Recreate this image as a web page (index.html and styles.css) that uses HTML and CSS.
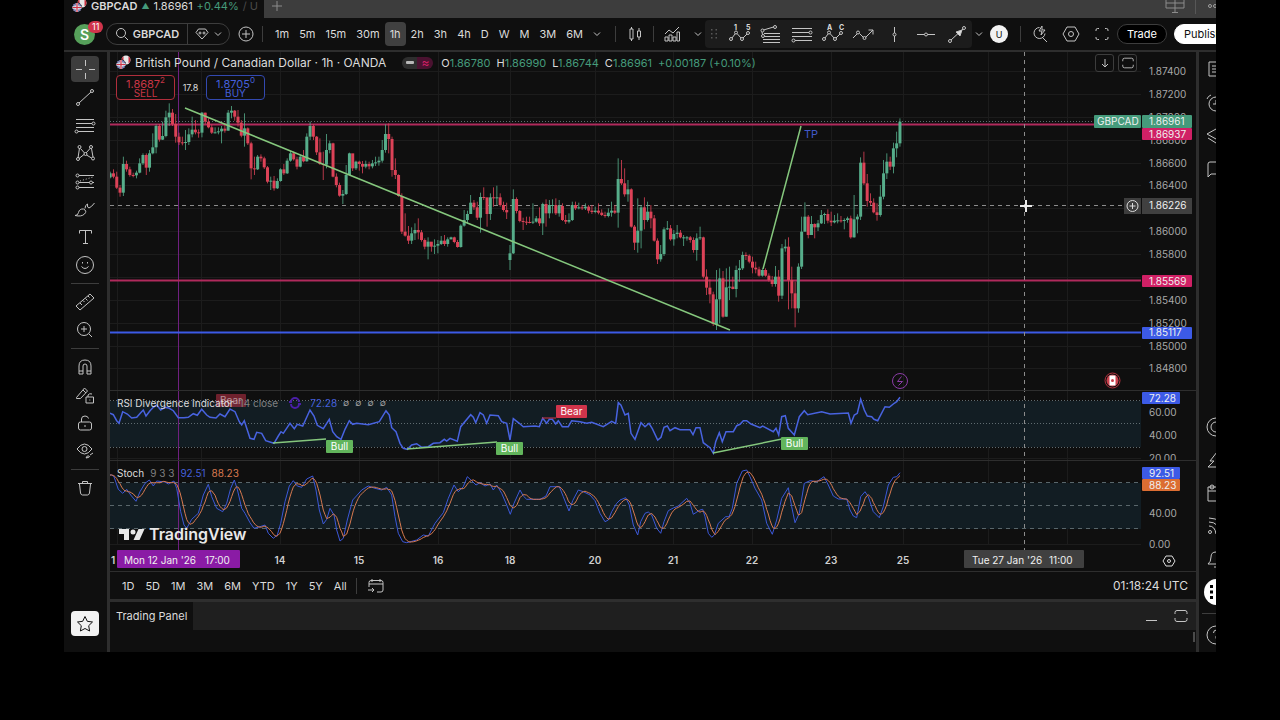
FILE: index.html
```html
<!DOCTYPE html>
<html lang="en">
<head>
  <meta charset="UTF-8">
  <meta name="viewport" content="width=device-width, initial-scale=1.0">
  <title>GBPCAD 1.86961 +0.44%</title>
  <link rel="stylesheet" href="styles.css">
</head>
<body>
  <!-- Shared symbols -->
  <svg class="defs" width="0" height="0">
    <defs>
      <symbol id="flags" viewBox="0 0 15 15">
        <circle cx="10" cy="5" r="4.5" fill="#e8e8e8"/>
        <path d="M7.5 1.3a4.5 4.5 0 0 0 0 7.4zM12.5 1.3a4.5 4.5 0 0 1 0 7.4z" fill="#c9303f"/>
        <circle cx="5" cy="9.5" r="5" fill="#0f0f0f"/>
        <circle cx="5" cy="9.5" r="4.5" fill="#5868a8"/>
        <path d="M2 6.5l6 6M8 6.5l-6 6" stroke="#e8d0d8" stroke-width="1"/>
        <path d="M5 5v9M.5 9.5h9" stroke="#eee" stroke-width="2.4"/>
        <path d="M5 5v9M.5 9.5h9" stroke="#cf3348" stroke-width="1.2"/>
      </symbol>
      <symbol id="chevron" viewBox="0 0 8 8"><path d="M1 2.5l3 3 3-3"/></symbol>
      <symbol id="maximize" viewBox="0 0 16 16"><path d="M2 6V4.500Q2 2.500 4 2.500h8q2 0 2 2V6M2 10v1.500q0 2 2 2h8q2 0 2-2V10"/></symbol>
    </defs>
  </svg>

  <div class="app">
    <!-- Desktop tabs -->
    <div class="tabs">
      <div class="tab">
        <svg class="flags"><use href="#flags"/></svg>
        <b>GBPCAD</b><span class="up arrow">▲</span><span>1.86961</span><span class="up">+0.44%</span><span class="fade">/ U</span>
      </div>
      <button class="new-tab" aria-label="New tab"><svg class="icon" width="12" height="12" viewBox="0 0 12 12"><path d="M6 1v10M1 6h10"/></svg></button>
      <svg class="icon layout-icon" width="20" height="14" viewBox="0 0 20 14"><path d="M1 0v8h18V0M1 3h18M10 0v12M7 12.5h6"/></svg>
      <span class="tab-line"></span>
      <svg class="icon tab-more" width="8" height="12" viewBox="0 0 8 12"><circle cx="2" cy="6" r="1.5"/><circle cx="7" cy="6" r="1.5"/></svg>
    </div>

    <!-- Top toolbar -->
    <header class="topbar">
      <button class="avatar">S<span class="badge">11</span></button>
      <div class="symbol">
        <button class="search"><svg class="icon" width="14" height="14" viewBox="0 0 14 14"><circle cx="6" cy="6" r="4.5"/><path d="M9.5 9.5l3.5 3.5"/></svg>GBPCAD</button>
        <button class="gem" aria-label="Symbol list"><svg class="icon" width="14" height="12" viewBox="0 0 14 12"><path d="M3.5 1h7L13 4.500 7 11 1 4.500zM5 3.500v3M3.500 5h3M9 3.500v3M7.500 5h3"/></svg><svg class="icon" width="8" height="8"><use href="#chevron"/></svg></button>
      </div>
      <button class="add" aria-label="Compare"><svg class="icon" width="16" height="16" viewBox="0 0 16 16"><circle cx="8" cy="8" r="7"/><path d="M8 4v8M4 8h8"/></svg></button>
      <span class="vline"></span>
      <nav class="frames">
        <button>1m</button><button>5m</button><button>15m</button><button>30m</button><button class="active">1h</button><button>2h</button><button>3h</button><button>4h</button><button>D</button><button>W</button><button>M</button><button>3M</button><button>6M</button>
        <button aria-label="More intervals"><svg class="icon" width="8" height="8"><use href="#chevron"/></svg></button>
      </nav>
      <span class="vline"></span>
      <button class="tool" aria-label="Candles"><svg class="icon" width="16" height="16" viewBox="0 0 16 16"><path d="M3 3h3v10H3zM4.500 1v2M4.500 13v2M10.500 5h3v6h-3zM12 2v3M12 11v3"/></svg></button>
      <span class="vline"></span>
      <button class="tool" aria-label="Indicators"><svg class="icon" width="17" height="16" viewBox="0 0 17 16"><path d="M1 15v-4h3v4zM5 15V9h3v6zM9 15v-4h3v4zM13 15V6h2.500v9zM1 8l4-4 4 3 6-6"/></svg></button>
      <button class="mini" aria-label="Templates"><svg class="icon" width="8" height="8"><use href="#chevron"/></svg></button>
      <div class="favorites">
        <svg class="dots" width="8" height="12" viewBox="0 0 8 12"><path d="M1 1h1.500v1.500H1zM5.500 1H7v1.500H5.500zM1 5h1.500v1.500H1zM5.500 5H7v1.500H5.500zM1 9h1.500v1.500H1zM5.500 9H7v1.500H5.500z"/></svg>
        <button aria-label="Elliott impulse"><svg class="icon" width="24" height="20" viewBox="0 0 24 20"><path d="M4 14l3-4M9 9.500l4 4.500M15 14l4-4"/><circle cx="3" cy="15" r="1.500"/><circle cx="8" cy="8.500" r="1.500"/><circle cx="14" cy="15" r="1.500"/><circle cx="20" cy="9" r="1.500"/><text x="6" y="6">1</text><text x="18" y="6">5</text></svg></button>
        <button aria-label="Fib channel"><svg class="icon" width="22" height="20" viewBox="0 0 22 20"><path d="M3.500 6l10-3M2 8l.5 2.500M4 9.500h16M4.500 12.500h15.500M3 15.500h17M3 18.500h17"/><circle cx="2.500" cy="6.500" r="1.500"/><circle cx="15" cy="3" r="1.500"/><circle cx="3" cy="12" r="1.500"/></svg></button>
        <button aria-label="Fib retracement"><svg class="icon" width="22" height="20" viewBox="0 0 22 20"><path d="M1 4.500h20M1 8.500h17M1 12.500h20M4 16.500h17"/><circle cx="19.500" cy="8.500" r="1.500"/><circle cx="2.500" cy="16.500" r="1.500"/></svg></button>
        <button aria-label="Elliott correction"><svg class="icon" width="24" height="20" viewBox="0 0 24 20"><path d="M4 14l3-4M9 9.500l4 4.500M15 14l4-4"/><circle cx="3" cy="15" r="1.500"/><circle cx="8" cy="8.500" r="1.500"/><circle cx="14" cy="15" r="1.500"/><circle cx="20" cy="9" r="1.500"/><text x="6" y="6">A</text><text x="18" y="6">C</text></svg></button>
        <button aria-label="Path"><svg class="icon" width="24" height="20" viewBox="0 0 24 20"><path d="M1 14l4-4M7.500 9.500l4 4M13.500 13.500L21 6M16.500 6H21v4.500"/><circle cx="6" cy="8.500" r="1.500"/><circle cx="12.500" cy="14" r="1.500"/></svg></button>
        <button aria-label="Vertical line"><svg class="icon" width="21" height="20" viewBox="0 0 21 20"><path d="M10.500 3v6M10.500 12v6"/><circle cx="10.500" cy="10.500" r="1.500"/></svg></button>
        <button aria-label="Horizontal line"><svg class="icon" width="20" height="20" viewBox="0 0 20 20"><path d="M1 10.500h7.500M11.500 10.500H19"/><circle cx="10" cy="10.500" r="1.500"/></svg></button>
        <button aria-label="Trend arrow"><svg class="icon" width="20" height="20" viewBox="0 0 20 20"><path d="M4 16L16 5"/><circle cx="3" cy="17" r="1.500"/><circle cx="17" cy="4" r="1.500"/><path d="M15 6l-2 6-4-4z" fill="#dbdbdb"/></svg></button>
      </div>
      <button class="mini" aria-label="Layouts"><svg class="icon" width="8" height="8"><use href="#chevron"/></svg></button>
      <button class="user">U</button>
      <span class="vline"></span>
      <button class="wide first" aria-label="Quick search"><svg class="icon" width="18" height="18" viewBox="0 0 18 18"><path d="M8.500 2.500a5.500 5.500 0 1 0 5.500 6M12 13l4 4M11 1L8 6h3l-1 4 4-5h-3z"/></svg></button>
      <button class="wide" aria-label="Settings"><svg class="icon" width="18" height="16" viewBox="0 0 18 16"><path d="M5 1h8l4 7-4 7H5L1 8z"/><circle cx="9" cy="8" r="2.500"/></svg></button>
      <button class="wide" aria-label="Fullscreen"><svg class="icon" width="16" height="14" viewBox="0 0 16 14"><path d="M2 4V3q0-1.500 1.500-1.500H5M11 1.500h1.500Q14 1.500 14 3v1M14 10v1q0 1.500-1.500 1.500H11M5 12.500H3.500Q2 12.500 2 11v-1"/></svg></button>
      <button class="trade">Trade</button>
      <button class="publish">Publish</button>
    </header>

    <main class="workspace">
      <!-- Drawing tools -->
      <aside class="tools">
        <button class="active" aria-label="Cross"><svg class="icon" width="21" height="21" viewBox="0 0 21 21"><path d="M10.500 1v6M10.500 14v6M1 10.500h6M14 10.500h6"/></svg></button>
        <button aria-label="Trend line"><svg class="icon" width="20" height="20" viewBox="0 0 20 20"><path d="M4 16L16 5"/><circle cx="3" cy="17" r="1.500"/><circle cx="17" cy="4" r="1.500"/></svg></button>
        <button aria-label="Fib retracement"><svg class="icon" width="22" height="20" viewBox="0 0 22 20"><path d="M2 4.500h18M2 8.500h16M2 12.500h18M4 16.500h16"/><circle cx="19.500" cy="8.500" r="1.500"/><circle cx="2.500" cy="16.500" r="1.500"/></svg></button>
        <button aria-label="Patterns"><svg class="icon" width="20" height="20" viewBox="0 0 20 20"><path d="M3 15L4.500 5M5.500 5.500l4 4.500M11 10l4.500-5M16.500 5.500L18 14M4 15.500l5-4M11.500 12l5 3"/><circle cx="4.500" cy="4" r="1.500"/><circle cx="16" cy="4" r="1.500"/><circle cx="10.500" cy="11" r="1.500"/><circle cx="3" cy="16" r="1.500"/><circle cx="18" cy="15.500" r="1.500"/></svg></button>
        <button aria-label="Forecasting"><svg class="icon" width="20" height="20" viewBox="0 0 20 20"><path d="M4 4.500h15M4 11.500h10.500M17.500 11.500H19M4 16.500h15"/><path d="M5 10l13-4" stroke-dasharray="1 2"/><circle cx="2.500" cy="4.500" r="1.500"/><circle cx="2.500" cy="11.500" r="1.500"/><circle cx="2.500" cy="16.500" r="1.500"/><circle cx="16" cy="11.500" r="1.500"/></svg></button>
        <button aria-label="Brush"><svg class="icon" width="22" height="20" viewBox="0 0 22 20"><path d="M1 16.500q3 0 3.500-3 1-4 5-3.500 4 2 1 5-3 3-9.500 1.500zM11 9.500q0-3.500 2.500-4.500-.5 4 1.500 4 2.500-1 5.500-5"/></svg></button>
        <button aria-label="Text"><svg class="icon" width="21" height="20" viewBox="0 0 21 20"><path d="M4.500 6.500v-3h12v3M10.500 3.500V16M8 16.500h5"/></svg></button>
        <button aria-label="Icons"><svg class="icon" width="20" height="20" viewBox="0 0 20 20"><circle cx="10" cy="10" r="8.500"/><path d="M6.500 11.500q3.500 4 7 0M7.500 7v1.500M12.500 7v1.500"/></svg></button>
        <hr>
        <button aria-label="Measure"><svg class="icon" width="20" height="20" viewBox="0 0 20 20"><path d="M1 14L15 2l4 4L5 18zM5 11l2 2M8 8.500l1.500 1.500M10.500 6.500l2 2M13 4l1.500 1.500"/></svg></button>
        <button aria-label="Zoom in"><svg class="icon" width="18" height="18" viewBox="0 0 18 18"><circle cx="8" cy="8" r="6.500"/><path d="M13 13l3 3M8 5v6M5 8h6"/></svg></button>
        <hr>
        <button aria-label="Magnet"><svg class="icon" width="18" height="18" viewBox="0 0 18 18"><path d="M3 16V8q0-6 6-6t6 6v8h-4V8q0-2-2-2T7 8v8zM3 13h4M11 13h4"/></svg></button>
        <button aria-label="Stay in drawing mode"><svg class="icon" width="20" height="20" viewBox="0 0 20 20"><path d="M1.500 12.500l8-9.500 3 3-7 7.500h-4zM8 5l3 3M11 12h7.500v6H11zM13 12v-2q1.500-2 4-1M14.800 14.500v1"/></svg></button>
        <button aria-label="Lock drawings"><svg class="icon" width="18" height="18" viewBox="0 0 18 18"><path d="M4.500 8h9q2 0 2 2v4q0 2-2 2h-9q-2 0-2-2v-4q0-2 2-2zM5.500 8V5Q5.500 2 9 2q3 0 3.500 2.500M9 11v2"/></svg></button>
        <button aria-label="Hide drawings"><svg class="icon" width="20" height="20" viewBox="0 0 20 20"><path d="M2 8q7.500-10 15 0-7.500 10-15 0M11 17q1-3 3-2t-3 2M15 14l3-2"/><circle cx="9.500" cy="8" r="2.500"/></svg></button>
        <hr>
        <button aria-label="Remove"><svg class="icon" width="18" height="18" viewBox="0 0 18 18"><path d="M2 4.500h14M6.500 4.500v-2h5v2M3.500 5l1 9q.5 2 2 2h5q1.500 0 2-2l1-9"/></svg></button>
        <button class="star" aria-label="Favorites"><svg class="icon" width="18" height="18" viewBox="0 0 18 18"><path d="M9 1.500l2.300 4.800 5.200.7-3.800 3.700.9 5.300L9 13.500 4.400 16l.9-5.300L1.500 7l5.200-.7z"/></svg></button>
      </aside>

      <section class="center">
        <div class="chart">
          <svg class="plot" viewBox="110 52 1086 519">
            <g id="grid"></g>
            <!-- Indicator bands -->
            <path class="band" d="M110 401h1031v46H110zM110 483h1031v46H110z"/>
            <path class="dotted" d="M110 400.500h1031M110 423.500h1031M110 447.500h1031"/>
            <path class="dashed" d="M110 482.500h1031M110 505.500h1031M110 528.500h1031"/>
            <path class="vertical" d="M178.500 52V550"/>
            <!-- Price levels -->
            <path class="dotted" d="M110 121.500h984"/>
            <path class="level" d="M110 124.500h1031M110 280.500h1031"/>
            <path class="level blue" d="M110 332.500h1031"/>
            <path class="cross" d="M110 205.500h1015M1024.500 52V550"/>
            <g id="candles"></g>
            <path class="trend" d="M185 108L730 330M763 269L801 126"/>
            <text class="tp" x="804" y="138">TP</text>

            <!-- Indicators -->
            <rect class="bear old" x="216" y="394" width="30" height="13" rx="1"/>
            <text class="mark old" x="220" y="404">Bear</text>
            <path id="rsi" class="rsi"/>
            <path class="trend" d="M273 443L326 439M407 449L497 442M713 453L782 439"/>
            <path class="bear-line" d="M542 418h14"/>
            <rect class="bear" x="556" y="405" width="31" height="13" rx="1"/>
            <text class="mark" x="571.500" y="415">Bear</text>
            <rect class="bull" x="326" y="440" width="27" height="13" rx="1"/>
            <text class="mark" x="339.500" y="450">Bull</text>
            <rect class="bull" x="496" y="442" width="27" height="13" rx="1"/>
            <text class="mark" x="509.500" y="452">Bull</text>
            <rect class="bull" x="781" y="437" width="27" height="13" rx="1"/>
            <text class="mark" x="794.500" y="447">Bull</text>
            <path id="stochK" class="stoch k"/>
            <path id="stochD" class="stoch d"/>

            <!-- Event badges -->
            <circle class="event" cx="900" cy="381" r="7.500"/>
            <path class="event" d="M901.500 376.500l-4 5h5l-4 4"/>
            <circle cx="1112.500" cy="380.500" r="7.500" fill="#0f0f0f" stroke="#b3323f"/>
            <circle cx="1112.500" cy="380.500" r="6" fill="#c9404c"/>
            <rect x="1109.500" y="375.500" width="6" height="10" fill="#fff"/>
            <circle cx="1112.500" cy="380.500" r="1.500" fill="#c9404c"/>

            <!-- Axes -->
            <g id="axis" class="axis"></g>
            <rect x="1142" y="461" width="50" height="6" fill="#0f0f0f"/>
            <path class="split" d="M110 390.500h1086M110 460.500h1086"/>
            <rect x="1094" y="115" width="47" height="13" rx="1" fill="#459b7b"/>
            <rect x="1142" y="115" width="50" height="13" rx="1" fill="#459b7b"/>
            <rect x="1142" y="128" width="50" height="12" rx="1" fill="#d02065"/>
            <rect x="1124" y="198" width="17" height="16" fill="#3d3d3d"/>
            <rect x="1142" y="198" width="50" height="16" fill="#404040"/>
            <rect x="1142" y="275" width="50" height="12" rx="1" fill="#d02065"/>
            <rect x="1142" y="327" width="50" height="12" rx="1" fill="#3c5ae6"/>
            <rect x="1142" y="392" width="38" height="12" rx="1" fill="#3c5ae6"/>
            <rect x="1142" y="467" width="38" height="12" rx="1" fill="#3c5ae6"/>
            <rect x="1142" y="479" width="38" height="12" rx="1" fill="#dc6d32"/>
            <g class="tag">
              <text x="1097" y="125">GBPCAD</text>
              <text x="1149" y="125">1.86961</text>
              <text x="1149" y="138">1.86937</text>
              <text x="1149" y="209">1.86226</text>
              <text x="1149" y="285">1.85569</text>
              <text x="1149" y="336">1.85117</text>
              <text x="1149" y="402">72.28</text>
              <text x="1149" y="477">92.51</text>
              <text x="1149" y="489">88.23</text>
            </g>
            <path class="plus" d="M1132.500 203v6M1129.500 206h6"/>
            <circle class="plus" cx="1132.500" cy="206" r="5.500"/>
            <rect x="117" y="550" width="123" height="18" rx="1" fill="#8a1ba5"/>
            <rect x="964" y="550" width="120" height="18" rx="1" fill="#404040"/>
            <g class="tag">
              <text x="124" y="564">Mon 12 Jan '26</text>
              <text x="205" y="564">17:00</text>
              <text x="972" y="564">Tue 27 Jan '26</text>
              <text x="1049" y="564">11:00</text>
            </g>
            <path class="plus" d="M1166 556h6l3 5-3 5h-6l-3-5z"/>
            <circle class="plus" cx="1169" cy="561" r="1.500"/>
            <path class="cursor" d="M1026 200v12M1020 206h12"/>
            <!-- Brand -->
            <path class="brand" d="M119 529h10v11h-5v-6h-5zM138.500 529h6l-5 11h-6z"/>
            <circle class="brand" cx="133" cy="532" r="2.500"/>
            <text class="brand name" x="149" y="540">TradingView</text>
          </svg>

          <div class="legend">
            <svg class="flags"><use href="#flags"/></svg>
            <h1>British Pound / Canadian Dollar · 1h · OANDA</h1>
            <span class="status"><i></i><em>≈</em></span>
            <span class="ohlc">O<b>1.86780</b></span>
            <span class="ohlc">H<b>1.86990</b></span>
            <span class="ohlc">L<b>1.86744</b></span>
            <span class="ohlc">C<b>1.86961</b></span>
            <span class="ohlc"><b>+0.00187 (+0.10%)</b></span>
          </div>
          <div class="quotes">
            <button class="sell">1.8687<sup>2</sup><span>SELL</span></button>
            <span class="spread">17.8</span>
            <button class="buy">1.8705<sup>0</sup><span>BUY</span></button>
          </div>
          <div class="pane-buttons">
            <button aria-label="Move pane"><svg class="icon" width="14" height="14" viewBox="0 0 14 14"><path d="M7 3v8M4 8l3 3 3-3"/></svg></button>
            <button aria-label="Maximize pane"><svg class="icon" width="14" height="14"><use href="#maximize"/></svg></button>
          </div>
          <div class="study rsi-study">
            <span>RSI Divergence Indicator</span><span class="muted">14 close</span>
            <svg class="loader" width="14" height="12" viewBox="0 0 14 12"><path d="M3 5a4 4 0 0 1 8 0M11 7a4 4 0 0 1-8 0M1 5h3M10 7h3"/></svg>
            <span class="blue">72.28</span><span class="empty">∅</span><span class="empty">∅</span><span class="empty">∅</span><span class="empty">∅</span>
          </div>
          <div class="study stoch-study">
            <span>Stoch</span><span class="muted">9 3 3</span><span class="blue">92.51</span><span class="orange">88.23</span>
          </div>
        </div>

        <div class="ranges">
          <button>1D</button><button>5D</button><button>1M</button><button>3M</button><button>6M</button><button>YTD</button><button>1Y</button><button>5Y</button><button>All</button>
          <span class="vline"></span>
          <button aria-label="Go to date"><svg class="icon" width="18" height="16" viewBox="0 0 18 16"><path d="M2 9V4.500q0-2 2-2h10q2 0 2 2V12q0 2-2 2h-4M2 6h14M5 1v3M13 1v3M1 12h6M5 10l2 2-2 2"/></svg></button>
          <time>01:18:24 UTC</time>
        </div>

        <div class="panel">
          <div class="panel-head">
            <button class="panel-tab">Trading Panel</button>
            <button class="panel-btn" aria-label="Minimize"><svg class="icon" width="14" height="16" viewBox="0 0 14 16"><path d="M1 12.500h11"/></svg></button>
            <button class="panel-btn" aria-label="Maximize"><svg class="icon" width="16" height="16"><use href="#maximize"/></svg></button>
          </div>
          <div class="panel-body"><span class="thumb"></span></div>
        </div>
      </section>

      <!-- Widget bar, runs past the right edge -->
      <aside class="rail">
        <button aria-label="Watchlist"><svg class="icon" width="20" height="20" viewBox="0 0 20 20"><path d="M3 2h14v16l-4-2H3zM6 6h8M6 9h8M6 12h8"/></svg></button>
        <button aria-label="Alerts"><svg class="icon" width="20" height="20" viewBox="0 0 20 20"><circle cx="10" cy="11" r="7"/><path d="M10 7v4H7M1 6q1-3 4-4M15 2q3 1 4 4"/></svg></button>
        <button aria-label="Object tree"><svg class="icon" width="20" height="20" viewBox="0 0 20 20"><path d="M10 3l9 5-9 5-9-5zM2 12l8 5 8-5"/></svg></button>
        <button aria-label="Chats"><svg class="icon" width="20" height="20" viewBox="0 0 20 20"><path d="M2 18V5q0-2 2-2h12q2 0 2 2v10H5z"/></svg></button>
        <span class="space"></span>
        <button aria-label="Screener"><svg class="icon" width="20" height="20" viewBox="0 0 20 20"><circle cx="10" cy="10" r="9"/><circle cx="10" cy="10" r="5"/></svg></button>
        <button aria-label="Pine"><svg class="icon" width="20" height="20" viewBox="0 0 20 20"><path d="M11 2L4 11h4L2 17h16l-6-6h4z"/></svg></button>
        <button aria-label="Calendar"><svg class="icon" width="20" height="20" viewBox="0 0 20 20"><path d="M2 4h16v14H2zM2 8h16"/><circle cx="6" cy="4" r="2"/></svg></button>
        <button aria-label="Streams"><svg class="icon" width="20" height="20" viewBox="0 0 20 20"><circle cx="4" cy="16" r="1.500"/><path d="M3 10q6 0 7 8M3 6q10 0 11 12M3 2q14 0 15 16"/></svg></button>
        <button aria-label="Notifications"><svg class="icon" width="20" height="20" viewBox="0 0 20 20"><path d="M2 15q3-2 3-7 0-5 5-5t5 5q0 5 3 7zM8 18h4"/></svg></button>
        <button class="apps" aria-label="Apps"><svg width="20" height="16" viewBox="0 0 20 16"><path d="M3 1h3v3H3zM3 6.500h3v3H3zM3 12h3v3H3zM9 1h3v3H9zM9 6.500h3v3H9zM9 12h3v3H9z"/></svg></button>
        <hr>
        <button aria-label="Help"><svg class="icon" width="20" height="20" viewBox="0 0 20 20"><circle cx="10" cy="10" r="9"/><path d="M7.500 8q0-3 3-3t2 3.500l-2.500 3v2"/></svg></button>
      </aside>
    </main>
  </div>
  <script src="script.js"></script>
</body>
</html>
```
FILE: styles.css
```css
body {
  margin: 0;
  background-color: #000;
  color: #dbdbdb;
  font-family: Inter, "Liberation Sans", sans-serif;
  font-size: 12px;
}

button {
  display: flex;
  align-items: center;
  justify-content: center;
  flex-shrink: 0;
  margin: 0;
  padding: 0;
  border: none;
  background: none;
  color: inherit;
  font: inherit;
  cursor: pointer;
}

.defs {
  position: absolute;
}

.icon {
  display: block;
  flex-shrink: 0;
  fill: none;
  stroke: #c4c4c4;
  stroke-width: 1;
}

.icon text {
  fill: #dbdbdb;
  stroke: none;
  font-size: 7px;
  font-weight: 700;
}

.flags {
  width: 15px;
  height: 15px;
  flex-shrink: 0;
}

.app {
  margin: 0 5%;
  overflow: hidden;
  background-color: #2e2e2e;
}

.vline {
  flex-shrink: 0;
  width: 1px;
  height: 16px;
  background-color: #3d3d3d;
}

/* Tabs */
.tabs {
  display: flex;
  height: 18px;
  background-color: #3d3d3d;
}

.tab {
  display: flex;
  gap: 4px;
  box-sizing: border-box;
  width: 200px;
  padding-left: 8px;
  overflow: hidden;
  background-color: #0f0f0f;
  font-size: 11px;
  line-height: 12px;
  white-space: nowrap;
}

.tab .flags {
  margin-top: -2px;
}

.tab b {
  font-weight: 600;
}

.up {
  color: #459b7b;
}

.arrow {
  font-size: 8px;
}

.fade {
  color: #4a4a4a;
}

.new-tab {
  width: 26px;
  height: 12px;
}

.new-tab .icon {
  stroke: #8c8c8c;
}

.layout-icon {
  margin-left: auto;
  stroke: #8c8c8c;
}

.tab-line {
  width: 1px;
  height: 14px;
  margin: 0 12px 0 10px;
  background-color: #575757;
}

.tab-more {
  stroke: #a0a0a0;
}

/* Top toolbar */
.topbar {
  display: flex;
  align-items: center;
  height: 32px;
  margin-bottom: 2px;
  background-color: #0f0f0f;
  overflow: hidden;
}

.avatar {
  position: relative;
  width: 21px;
  height: 21px;
  margin: 0 11px 0 10px;
  border-radius: 50%;
  background-color: #56a05a;
  color: #fff;
  font-size: 14px;
  font-weight: 600;
}

.badge {
  position: absolute;
  top: -3px;
  left: 14px;
  padding: 0 4px;
  border-radius: 6px;
  background-color: #d0344b;
  font-size: 9px;
  font-weight: 400;
  line-height: 12px;
}

.symbol {
  display: flex;
  flex-shrink: 0;
  height: 20px;
  border: 1px solid #3d3d3d;
  border-radius: 11px;
}

.search {
  gap: 4px;
  width: 81px;
  border-right: 1px solid #3d3d3d;
  font-size: 11px;
  font-weight: 600;
}

.gem {
  gap: 5px;
  width: 41px;
}

.add {
  width: 32px;
}

.frames {
  display: flex;
  align-items: center;
  flex-shrink: 0;
  margin: 0 9px 0 7px;
  font-size: 11px;
}

.frames button {
  height: 24px;
  padding: 0 5px;
  border-radius: 4px;
}

.frames .active {
  background-color: #404040;
}

.tool {
  width: 37px;
}

.mini {
  width: 14px;
}

.favorites {
  display: flex;
  align-items: center;
  flex-shrink: 0;
  height: 28px;
  padding-left: 5px;
  border-radius: 4px;
  background-color: #1c1c1c;
}

.favorites button {
  width: 31px;
}

.dots {
  margin-right: 6px;
  fill: #575757;
}

.user {
  width: 18px;
  height: 18px;
  margin: 0 12px 0 4px;
  border-radius: 50%;
  background-color: #f2f2f2;
  color: #0f0f0f;
  font-size: 9px;
}

.wide {
  width: 31px;
}

.first {
  margin-left: 3px;
}

.trade,
.publish {
  height: 20px;
  padding: 0 9px;
  border: 1px solid #3d3d3d;
  border-radius: 11px;
  background-color: #000;
  color: #fff;
  font-size: 11px;
}

.publish {
  margin-left: 7px;
  border-color: #fff;
  background-color: #fff;
  color: #0f0f0f;
}

/* Workspace */
.workspace {
  display: grid;
  grid-template-columns: 43px minmax(0, 1fr) 17px;
  gap: 3px;
}

.tools {
  display: flex;
  flex-direction: column;
  align-items: center;
  padding: 4px 1px 16px 0;
  background-color: #0f0f0f;
}

.tools button {
  width: 28px;
  height: 28px;
  border-radius: 4px;
}

.tools .active {
  height: 26px;
  margin-bottom: 1px;
  background-color: #3d3d3d;
}

.tools hr {
  width: 28px;
  height: 1px;
  margin: 4px 0;
  border: none;
  background-color: #3d3d3d;
}

.tools .star {
  height: 25px;
  margin-top: auto;
  background-color: #f2f2f2;
}

.star .icon {
  stroke: #0f0f0f;
}

.center {
  display: flex;
  flex-direction: column;
}

/* Chart */
.chart {
  position: relative;
  background-color: #0f0f0f;
}

.plot {
  display: block;
  width: 100%;
  font-size: 10px;
}

.plot path {
  fill: none;
}

#grid path {
  stroke: #1c1c1c;
}

.plot .band {
  fill: #121d23;
}

.dotted {
  stroke: #5f6b70;
  stroke-dasharray: 1 2;
}

.dashed {
  stroke: #59666b;
  stroke-dasharray: 4 4;
}

.split {
  stroke: #2e2e2e;
}

.vertical {
  stroke: #702080;
}

.level {
  stroke: #b02a5c;
  stroke-width: 2;
}

.level.blue {
  stroke: #3c5ae6;
}

.cross {
  stroke: #8c8c8c;
  stroke-dasharray: 4 4;
}

.cursor {
  stroke: #e8e8e8;
  stroke-width: 2;
}

.rise {
  fill: #56ad8a;
}

.fall {
  fill: #dc4257;
}

.trend {
  stroke: #85c77d;
  stroke-width: 1.5;
}

.tp {
  fill: #4058c8;
  font-size: 11px;
}

.rsi {
  stroke: #4863e0;
  stroke-width: 1.5;
}

.stoch {
  stroke-width: 1;
}

.k {
  stroke: #3c58d8;
}

.d {
  stroke: #d87a50;
}

.bear-line {
  stroke: #d0344b;
}

.bear {
  fill: #d0344b;
}

.bull {
  fill: #62b55c;
}

.mark {
  fill: #fff;
  text-anchor: middle;
}

.old {
  opacity: 0.5;
  text-anchor: start;
}

.event {
  fill: none;
  stroke: #8a3ca5;
}

.axis {
  fill: #a8a8a8;
}

.axis .day {
  fill: #d0d0d0;
  font-weight: 600;
  text-anchor: middle;
}

.tag {
  fill: #f0f0f0;
}

.plus {
  fill: none;
  stroke: #dbdbdb;
}

.plot .brand {
  fill: #e8e8e8;
}

.name {
  font-size: 16px;
  font-weight: 600;
}

.legend,
.quotes,
.pane-buttons,
.study {
  position: absolute;
  display: flex;
  align-items: center;
  white-space: nowrap;
}

.legend {
  top: 3px;
  left: 6px;
  gap: 4px;
}

.legend h1 {
  margin: 0;
  font-size: 12px;
  font-weight: 400;
}

.status {
  display: flex;
  align-items: center;
  justify-content: space-around;
  width: 31px;
  height: 12px;
  margin: 0 4px 0 12px;
  border-radius: 6px;
  background: linear-gradient(90deg, #2e2e2e 50%, #4a1230 50%);
}

.status i {
  width: 8px;
  height: 3px;
  border-radius: 1px;
  background-color: #b8b8b8;
}

.status em {
  color: #d02065;
  font-style: normal;
  line-height: 12px;
}

.ohlc {
  margin-right: 2px;
  font-size: 11px;
}

.ohlc b {
  color: #459b7b;
  font-weight: 400;
}

.quotes {
  top: 23px;
  left: 6px;
}

.quotes button {
  display: block;
  box-sizing: border-box;
  width: 59px;
  height: 25px;
  border: 1px solid #b02e3c;
  border-radius: 4px;
  background-color: #0f0f0f;
  color: #c93646;
  font-size: 11px;
  line-height: 10px;
}

.quotes span {
  display: block;
  font-size: 10px;
}

.quotes sup {
  font-size: 8px;
  line-height: 6px;
}

.quotes .buy {
  border-color: #3349b0;
  color: #4560dc;
}

.quotes .spread {
  width: 31px;
  font-size: 9px;
  text-align: center;
}

.pane-buttons {
  top: 2px;
  right: 59px;
  gap: 4px;
}

.pane-buttons button {
  width: 19px;
  height: 18px;
  border: 1px solid #3d3d3d;
  border-radius: 3px;
}

.study {
  left: 7px;
  gap: 6px;
  font-size: 10px;
  line-height: 12px;
}

.rsi-study {
  top: 345px;
}

.stoch-study {
  top: 415px;
}

.muted {
  color: #808080;
}

.blue {
  color: #4560dc;
}

.orange {
  color: #d87a50;
}

.empty {
  color: #a0a0a0;
  font-size: 9px;
}

.loader {
  margin: 0 2px 0 4px;
  fill: none;
  stroke: #4b1fa8;
  stroke-width: 2;
}

/* Ranges under the chart */
.ranges {
  display: flex;
  align-items: center;
  gap: 1px;
  height: 27px;
  margin-top: 1px;
  padding: 0 8px 0 7px;
  background-color: #0f0f0f;
  font-size: 11px;
}

.ranges button {
  padding: 0 5px;
}

.ranges .vline {
  margin: 0 4px 0 3px;
}

.ranges time {
  margin-left: auto;
  font-size: 12px;
}

/* Trading panel */
.panel {
  margin-top: 3px;
  background-color: #0f0f0f;
}

.panel-head {
  display: flex;
  height: 28px;
  padding-right: 7px;
  background-color: #1f1f1f;
}

.panel-tab {
  margin-right: auto;
  padding: 0 6px;
  background-color: #0f0f0f;
  font-size: 11px;
}

.panel-btn {
  margin-left: 14px;
}

.panel-body {
  display: flex;
  justify-content: flex-end;
  height: 22px;
  padding-right: 1px;
}

.thumb {
  width: 2px;
  height: 10px;
  margin-top: 2px;
  background-color: #4a4a4a;
}

/* Widget bar */
.rail {
  display: flex;
  flex-direction: column;
  box-sizing: border-box;
  padding: 1px 0 0 7px;
  overflow: hidden;
  background-color: #0f0f0f;
}

.rail button {
  width: 20px;
  height: 33px;
}

.rail .space {
  height: 225px;
}

.rail .apps {
  width: 26px;
  height: 26px;
  margin: 4px 0 4px -2px;
  border-radius: 50%;
  background-color: #fff;
}

.rail hr {
  width: 20px;
  height: 1px;
  margin: 4px 0 4px -4px;
  border: none;
  background-color: #3d3d3d;
}
```
FILE: script.js
```js
const SVG = "http://www.w3.org/2000/svg";
const FIRST_X = 110.2;
const STEP = 3.277;

// [close, high, low] per hour in thirds of a pixel below `top`; open is the previous close
const sessions = [
  { top: 90, open: 262, bars: [
    [250,245,265],[260,238,265],[293,245,297],[308,285,320],[222,200,318],[238,212,245],[255,230,260],[256,248,262],
    [248,242,265],[220,205,250],[195,190,225],[233,190,255],[190,180,245],[172,130,193],[108,103,190],[149,102,155],
    [138,95,150],[82,62,142],[68,40,108],[102,57,108],[140,72,158],[157,128,165],[158,140,166],[156,120,180],
    [133,115,165],[119,80,142],[127,90,133],[128,118,143],[68,66,142],[95,68,102],[112,85,115],[128,103,132],
    [127,112,130],[124,112,133],[116,108,160],[122,100,128],[68,60,122],[62,48,85],[80,60,92],[98,60,110],
    [137,90,142],[115,70,170],[160,112,165],[235,155,268],[238,200,255],[200,195,240],[205,193,215],[232,200,237],
    [275,228,280],[272,260,300],[295,258,302],[273,265,297],[238,235,275],[250,222,255],[212,205,252],[190,183,215],
    [208,185,212],[230,200,238],[200,195,232],[214,180,217],[140,130,215],[108,95,150],[140,103,150],[187,138,195],
    [222,145,225],[224,185,270],[180,132,235],[160,152,190],[260,158,262],[285,250,292],[317,278,320],[312,300,342],
    [255,225,315],[190,188,250],[235,215,243],[215,212,240],[222,212,242],[230,213,250],[222,212,235],[229,215,238],
    [220,210,235],[217,200,228],[212,200,227],[180,150,218],[132,103,188],[147,100,190],[240,140,260],[255,205,267],
    [318,253,320],[425,310,432],[437,370,440],[452,408,462]] },
  { top: 150, open: 272, bars: [
    [250,232,282],[240,220,270],[247,205,268],[270,240,275],[290,265,298],[275,262,328],[290,278,305],[287,268,312],
    [282,270,310],[272,258,285],[282,255,288],[268,262,290],[262,260,268],[276,260,280],[291,270,293],[227,223,293],
    [210,180,230],[192,182,220],[158,135,192],[172,150,180],[203,155,210],[141,128,248],[142,112,150],[192,145,230],
    [142,130,210],[143,112,170],[142,107,165],[165,130,170],[180,155,185],[187,158,207]] },
  { top: 150, open: 330, bars: [
    [310,285,360],[147,118,312],[183,142,190],[213,180,217],[215,203,240],[216,200,225],[217,200,220],[215,160,222],
    [205,198,218],[220,172,228],[162,158,255],[190,148,230],[165,150,205],[165,148,190],[190,145,195],[168,150,200],
    [210,160,213],[215,195,222],[210,190,220],[165,155,213],[175,155,180],[172,158,178],[175,165,180],[170,160,180],
    [182,165,190],[186,165,192],[182,170,190],[188,160,193],[195,178,198],[198,185,203],[188,175,202],[182,155,200],
    [188,165,192],[87,25,233],[100,30,105],[133,55,140],[118,90,155],[230,115,233],[278,225,300],[242,145,308],
    [172,165,295],[210,142,238],[185,155,215],[205,165,235],[272,195,275],[328,265,342],[312,285,335],[238,232,318],
    [235,213,240],[268,225,272],[252,240,287],[248,225,265],[262,240,265],[262,255,288],[262,258,272],[270,258,278],
    [300,262,308]] },
  { top: 100, open: 450, bars: [
    [415,400,482],[412,380,420],[530,410,535],[563,508,585],[583,538,610],[672,575,678],[598,510,690],[535,505,670],
    [650,513,653],[562,505,650],[560,500,600],[567,530,568],[510,497,592],[505,480,545],[465,455,510],[467,457,480],
    [485,463,490],[503,470,520],[508,485,520],[527,500,530],[510,505,530],[527,505,530],[540,520,545],[552,528,560],
    [530,498,560],[587,510,605],[445,432,597],[440,418,455],[540,412,628],[580,500,625],[625,545,682],[500,490,638],
    [395,350,507],[350,307,395],[405,345,415],[372,348,405],[382,370,415],[370,360,393],[345,330,372],[342,338,372],
    [362,328,370],[367,335,378],[362,345,370],[361,340,370],[363,348,368],[360,355,388],[355,350,368],[412,347,416],
    [358,285,413],[350,343,400],[188,172,360],[250,155,255],[303,222,320],[308,280,315],[337,295,340],[345,310,362],
    [290,255,350],[220,180,298],[185,160,237],[200,170,210],[145,128,220],[130,95,172],[65,55,140]] }
];

// x,y pairs in thirds of a pixel from 110,380
const rsi = [
  0,100,10,104,20,122,27,130,38,95,52,102,65,114,80,112,92,98,100,90,108,108,120,92,130,82,140,75,152,90,165,82,178,85,
  190,92,205,113,222,113,235,112,250,101,262,106,275,88,290,105,300,112,318,114,330,102,345,110,360,87,375,95,388,125,
  395,135,403,122,420,175,432,178,440,157,455,160,467,182,492,190,505,168,513,155,520,160,540,130,553,146,562,133,578,138,
  600,90,612,108,622,136,640,146,658,118,668,155,680,170,693,178,705,148,718,122,728,133,740,130,775,134,808,125,828,92,
  838,105,845,143,858,155,870,190,880,205,892,208,905,195,920,191,935,202,955,200,970,190,990,188,1003,178,1010,183,
  1020,175,1042,184,1052,140,1082,104,1090,112,1097,128,1110,98,1120,105,1130,130,1140,105,1165,107,1175,125,1190,130,
  1200,180,1210,116,1228,130,1240,140,1275,138,1288,140,1298,115,1310,130,1318,118,1327,118,1337,132,1345,122,1357,140,
  1375,140,1385,122,1410,125,1430,130,1445,127,1480,140,1505,124,1517,130,1525,68,1533,76,1545,105,1555,100,1563,160,
  1575,178,1593,128,1605,140,1617,130,1627,146,1643,180,1653,172,1662,142,1672,138,1680,152,1695,143,1710,149,1740,149,
  1749,164,1758,143,1770,143,1780,188,1800,203,1810,220,1817,185,1828,158,1837,185,1848,155,1870,155,1880,137,1890,133,
  1900,122,1910,122,1923,132,1950,143,1958,138,1990,155,1998,145,2006,165,2015,110,2026,107,2035,145,2053,165,2068,110,
  2083,92,2093,104,2135,95,2160,102,2215,99,2223,130,2233,105,2242,100,2252,58,2263,90,2272,108,2285,110,2292,118,
  2303,122,2325,80,2338,82,2350,72,2360,65,2370,52
];
const stoch = [
  0,285,5,285,12,290,25,328,38,340,50,328,62,345,78,364,90,335,105,310,118,300,130,318,140,303,165,306,175,312,192,303,
  200,325,212,395,222,435,230,445,245,418,265,400,280,345,295,313,305,350,320,385,338,395,350,370,362,325,373,300,
  382,328,395,385,405,400,420,428,432,445,450,440,465,435,475,460,490,475,502,465,512,430,525,365,538,318,550,302,
  562,318,575,322,590,297,608,288,618,330,628,390,640,432,650,418,660,385,672,405,680,450,690,483,700,475,712,420,
  728,360,742,345,755,330,775,318,795,325,815,330,830,322,845,345,855,410,865,460,878,485,890,488,920,480,940,465,
  955,468,975,430,1000,398,1015,355,1032,315,1045,335,1060,320,1072,290,1085,302,1098,315,1110,308,1125,318,1140,312,
  1150,330,1160,315,1175,340,1190,375,1201,403,1212,370,1230,330,1240,348,1250,358,1290,358,1308,348,1320,320,1348,320,
  1360,350,1377,393,1388,362,1405,330,1420,335,1440,345,1455,362,1470,400,1485,425,1495,420,1505,395,1520,370,1530,360,
  1547,353,1558,375,1570,435,1583,465,1592,425,1605,400,1615,396,1625,405,1640,445,1652,460,1662,425,1675,392,1690,384,
  1705,378,1730,355,1740,370,1750,403,1770,390,1778,388,1785,410,1795,460,1805,472,1813,465,1825,430,1847,410,1857,410,
  1867,385,1880,310,1897,273,1910,270,1920,290,1935,325,1955,360,1970,430,1987,463,2000,420,2015,355,2035,323,2045,380,
  2055,428,2068,400,2083,310,2100,302,2120,305,2142,290,2155,315,2170,348,2185,357,2210,357,2220,390,2230,408,2240,413,
  2252,350,2265,335,2275,350,2290,395,2308,413,2320,380,2335,315,2350,292,2360,290,2370,278
];

function add(parent, tag, attrs, text) {
  const el = document.createElementNS(SVG, tag);
  for (const key in attrs) el.setAttribute(key, attrs[key]);
  if (text) el.textContent = text;
  document.getElementById(parent).appendChild(el);
}

function drawAxes() {
  const columns = [117, 201, 280, 359, 438, 510, 595, 673, 752, 831, 903, 988, 1067];
  const days = { 280: "14", 359: "15", 438: "16", 510: "18", 595: "20", 673: "21", 752: "22", 831: "23", 903: "25" };
  columns.forEach(x => {
    add("grid", "path", { d: `M${x + 0.5} 52V545` });
    if (days[x]) add("axis", "text", { x: x, y: 564, class: "day" }, days[x]);
  });
  add("axis", "text", { x: 113, y: 564, class: "day" }, "1");
  for (let i = 0; i < 14; i++) {
    const y = Math.round(71 + i * 22.88);
    add("grid", "path", { d: `M110 ${y + 0.5}h1031` });
    // 1.86200 and 1.85600 sit under the price tags
    if (i !== 6 && i !== 9) add("axis", "text", { x: 1149, y: y + 4 }, (1.874 - i * 0.002).toFixed(5));
  }
  [[412, "60.00"], [435, "40.00"], [458, "20.00"], [513, "40.00"], [544, "0.00"]].forEach(([y, label]) => {
    add("grid", "path", { d: `M110 ${y + 0.5}h1031` });
    add("axis", "text", { x: 1149, y: y + 4 }, label);
  });
}

function drawCandles() {
  let index = 0;
  sessions.forEach(session => {
    let open = session.open;
    session.bars.forEach(([close, high, low]) => {
      const x = FIRST_X + index * STEP;
      const y = value => session.top + value / 3;
      const kind = close <= open ? "rise" : "fall";
      add("candles", "rect", { class: kind, x: x - 0.4, y: y(high), width: 0.8, height: (low - high) / 3 });
      add("candles", "rect", { class: kind, x: x - 1.5, y: y(Math.min(open, close)), width: 3, height: Math.max(1, Math.abs(close - open) / 3) });
      open = close;
      index++;
    });
  });
}

function toPath(points) {
  return "M" + points.map(([x, y]) => (110 + x / 3).toFixed(1) + " " + (380 + y / 3).toFixed(1)).join("L");
}

function pairs(flat) {
  const list = [];
  for (let i = 0; i < flat.length; i += 2) list.push([flat[i], flat[i + 1]]);
  return list;
}

function valueAt(points, x) {
  if (x <= points[0][0]) return points[0][1];
  for (let i = 1; i < points.length; i++) {
    const [x1, y1] = points[i - 1];
    const [x2, y2] = points[i];
    if (x <= x2) return y1 + (y2 - y1) * (x - x1) / (x2 - x1);
  }
  return points[points.length - 1][1];
}

function drawStudies() {
  document.getElementById("rsi").setAttribute("d", toPath(pairs(rsi)));
  const k = pairs(stoch);
  const d = [];
  for (let x = 0; x <= 2370; x += 5) {
    d.push([x, (valueAt(k, x) + valueAt(k, x - 10) + valueAt(k, x - 20)) / 3]);
  }
  document.getElementById("stochK").setAttribute("d", toPath(k));
  document.getElementById("stochD").setAttribute("d", toPath(d));
}

drawAxes();
drawCandles();
drawStudies();
```
